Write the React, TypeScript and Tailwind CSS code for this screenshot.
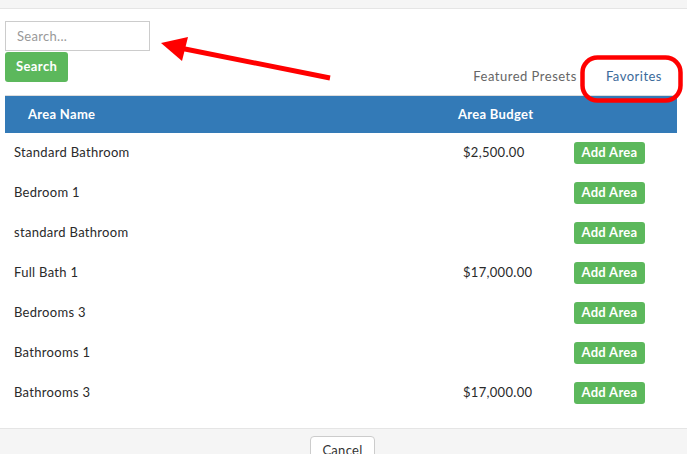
import React from "react";

const rows = [
  { name: "Standard Bathroom", budget: "$2,500.00" },
  { name: "Bedroom 1", budget: "" },
  { name: "standard Bathroom", budget: "" },
  { name: "Full Bath 1", budget: "$17,000.00" },
  { name: "Bedrooms 3", budget: "" },
  { name: "Bathrooms 1", budget: "" },
  { name: "Bathrooms 3", budget: "$17,000.00" },
];

export default function App() {
  return (
    <div className="relative w-[687px] h-[454px] overflow-hidden bg-white font-['Lato',sans-serif] text-[13px] text-[#2a2a2a]">
      {/* top strip of the modal */}
      <div className="h-[9px] bg-[#f5f5f5] border-b border-[#e5e5e5]" />

      <div className="pl-[5px] pr-[10px]">
        <div className="flex justify-between items-end h-[87px] border-b border-[#ddd]">
          <div className="self-start mt-[12px] flex flex-col items-start">
            <input
              className="w-[145px] h-[30px] border border-[#ccc] px-[11px] text-[13px] text-[#555] placeholder:text-[#999] tracking-[0.3px] outline-none"
              placeholder="Search..."
            />
            <button className="mt-[1px] h-[30px] px-[11px] bg-[#5cb85c] text-white font-bold rounded-[3px] tracking-[0.4px]">
              Search
            </button>
          </div>
          <div className="flex text-[13px] tracking-[0.5px]">
            <span className="px-[15px] py-[9px] text-[#666]">Featured Presets</span>
            <span className="pl-[14px] pr-[15px] py-[9px] text-[#3b6a9a]">Favorites</span>
          </div>
        </div>

        <div className="flex items-center h-[37px] bg-[#337ab7] text-white font-bold tracking-[0.3px]">
          <div className="w-[453px] pl-[23px]">Area Name</div>
          <div>Area Budget</div>
        </div>

        <div className="pb-[15px]">
          {rows.map((r) => (
            <div key={r.name} className="flex items-center h-[40px] tracking-[0.3px]">
              <div className="w-[458px] pl-[9px]">{r.name}</div>
              <div className="w-[111px]">{r.budget}</div>
              <button className="h-[22px] w-[71px] bg-[#5cb85c] text-white font-bold rounded-[3px]">
                Add Area
              </button>
            </div>
          ))}
        </div>
      </div>

      <div className="border-t border-[#e5e5e5] bg-[#f5f5f5] h-[40px] flex justify-center pt-[7px]">
        <button className="h-[30px] w-[65px] mr-[2px] bg-white border border-[#ccc] rounded-[4px] text-[#333] tracking-[0.3px]">
          Cancel
        </button>
      </div>

      {/* annotations drawn over the screenshot */}
      <svg className="absolute left-0 top-0 pointer-events-none" width="687" height="454">
        <line x1="330" y1="78" x2="180" y2="48" stroke="#f00" strokeWidth="5" />
        <polygon points="161,43 188,37 182,61" fill="#f00" />
        <rect x="582.5" y="57.5" width="98" height="43" rx="15" fill="none" stroke="#f00" strokeWidth="4.5" />
      </svg>
    </div>
  );
}
